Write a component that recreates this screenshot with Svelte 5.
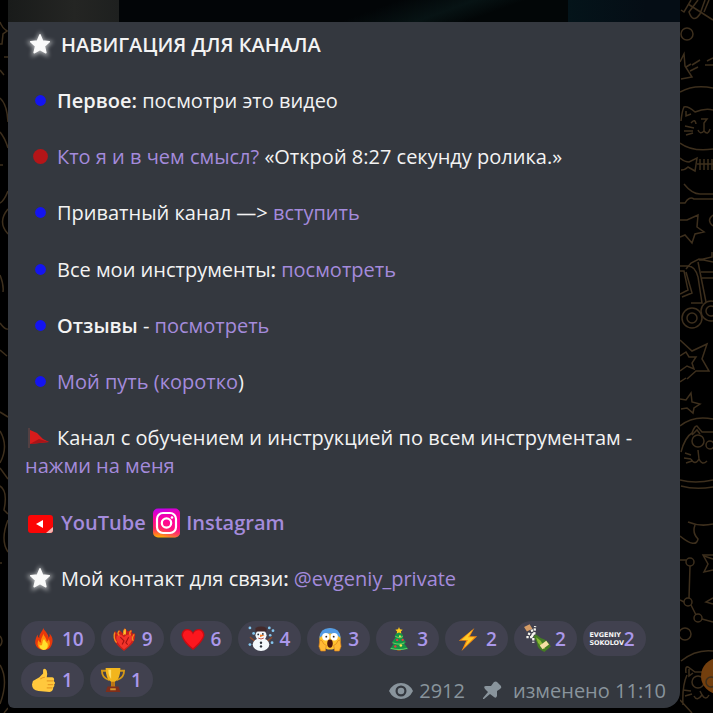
<script>
  const reactions = [
    ['fire', 10], ['burning', 9], ['heart', 6], ['snowman', 4], ['scream', 3],
    ['tree', 3], ['bolt', 2], ['bottle', 2], ['evgeniy', 2], ['thumb', 1], ['trophy', 1]
  ];
</script>

{#snippet star()}
  <svg class="star" viewBox="0 0 30 30" aria-hidden="true">
    <path class="glow" d="M15 4 L18.3 11.4 26 12.2 20.3 17.4 22 25 15 21.2 8 25 9.7 17.4 4 12.2 11.7 11.4Z" />
    <path fill="#fafafa" stroke="#fafafa" stroke-width="1.600" stroke-linejoin="round" d="M15 4 L17.8 10.8 25 11.5 19.7 16.200 21.3 23.3 15 19.8 8.7 23.3 10.3 16.200 5 11.5 12.2 10.8Z" />
  </svg>
{/snippet}

{#snippet dot(color, r)}
  <svg class="dot" viewBox="0 0 32 28" aria-hidden="true"><circle cx="15.500" cy="13.500" {r} fill={color} /></svg>
{/snippet}

<main>
  <svg class="wall" viewBox="0 0 8 713" preserveAspectRatio="xMinYMin slice" aria-hidden="true">
    <path d="M0 22Q2 28 7 31L3 34 2 44H0M4 57H8M0 70L4 75M0 98Q7 104 8 122M0 132Q5 138 8 148M0 165H3M8 191Q4 201 0 203M8 209Q-3 222 8 234M0 275Q4 285 3 292M0 323Q5 330 8 329M0 350L7 356M0 412L8 417M0 431Q9 446 0 463M0 468L8 479M0 486Q8 491 4 510L8 514M8 520Q0 540 8 552M0 563H2M0 636Q4 641 0 646M0 665Q9 680 0 704M4 713L8 708" />
  </svg>

  <article>
    <div class="photo"><i></i><b></b><em></em></div>
    <div class="body">
      <p>{@render star()}<strong>НАВИГАЦИЯ ДЛЯ КАНАЛА</strong></p>
      <p>{@render dot('#1414f0', 5.4)}<strong>Первое:</strong> посмотри это видео</p>
      <p>{@render dot('#b51518', 7.4)}<a href="#about">Кто я и в чем смысл?</a> «Открой 8:27 секунду ролика.»</p>
      <p>{@render dot('#1414f0', 5.4)}Приватный канал —&gt; <a href="#join">вступить</a></p>
      <p>{@render dot('#1414f0', 5.4)}Все мои инструменты<strong>:</strong> <a href="#tools">посмотреть</a></p>
      <p>{@render dot('#1414f0', 5.4)}<strong>Отзывы</strong> - <a href="#reviews">посмотреть</a></p>
      <p>{@render dot('#1414f0', 5.4)}<a href="#path">Мой путь (коротко</a>)</p>
      <p>
        <svg class="dot" viewBox="0 0 32 28" aria-hidden="true"><path d="M4 4V24" stroke="#5c4346" stroke-width="1.5" /><path d="M5 6L12 9 18 15 24 18 5 20Z" fill="#d91b1b" /><path d="M5 20L14 15 24 18Z" fill="#a81418" /></svg>Канал с обучением и инструкцией по всем инструментам - <a href="#learn">нажми на меня</a>
      </p>
      <p>
        <svg class="yt" viewBox="0 0 36 28" aria-hidden="true"><rect x="3" y="6" width="25" height="18" rx="3" fill="#fb0505" /><path d="M18 11V19L11 15Z" fill="#fff" /><path d="M28 18L21 24H25Q28 24 28 21Z" fill="#f5b4b0" /></svg><a class="semi" href="#youtube">YouTube</a>
        <svg class="ig" viewBox="0 0 28 30" aria-hidden="true">
          <defs>
            <linearGradient id="ig" x1="0" y1="0" x2="0" y2="1"><stop offset="0" stop-color="#c000ef" /><stop offset=".35" stop-color="#ff00a0" /><stop offset=".7" stop-color="#ff2860" /><stop offset="1" stop-color="#ffb000" /></linearGradient>
            <radialGradient id="igr" cx="1" cy=".5" r=".8"><stop stop-color="#ff009c" /><stop offset="1" stop-color="#ff009c" stop-opacity="0" /></radialGradient>
          </defs>
          <rect y="0.500" width="27" height="29" rx="5" fill="url(#ig)" /><rect y="0.500" width="27" height="29" rx="5" fill="url(#igr)" />
          <g fill="none" stroke="#fff" stroke-width="2.200"><rect x="4" y="5" width="19" height="20" rx="6" /><circle cx="13.500" cy="15" r="4.700" /></g><circle cx="19" cy="9.500" r="1.300" fill="#fff" />
        </svg>
        <a class="semi" href="#instagram">Instagram</a>
      </p>
      <p>{@render star()}Мой контакт для связи<strong>:</strong> <a href="#contact">@evgeniy_private</a></p>

      <footer>
        <div class="reactions">
          {#each reactions as [name, count]}
            <button type="button" aria-label={`${name} ${count}`}>
              <svg class="emoji" viewBox="0 0 26 26" aria-hidden="true">
                {#if name === 'fire'}
                  <path fill="#e8380b" d="M12 1C14 5 18 7 18 12Q20 10 19 7C23 11 23 16 21 20Q19 25 13 25Q5 25 3.500 18C3 14 5 10 6 8Q6 11 8 12C7 7 12 5 12 1Z" />
                  <path fill="#ff8c0a" d="M12 7C13 10 16 12 16 16Q18 15 18 13Q21 18 18 22 16 25 12.500 25 7 24 6 19 6 16 7 14 8 17 10 17C9 12 12 11 12 7Z" />
                  <path fill="#ffe02c" d="M13 13Q16 18 17 18 18 25 12.500 25 8 24 8 19 10 21 11 19 11 15 13 13Z" />
                {:else if name === 'burning'}
                  <path fill="#c9201a" d="M13 26Q2 18 2 11L3 4 6 7 8 3 12 7 14 1 17 5 21 3 22 7 25 7Q26 15 20 20Z" />
                  <path fill="#f2342a" d="M5 10Q9 6 13 11 17 6 22 10 24 16 13 24 3 16 5 10Z" />
                  <path fill="none" stroke="#f48a1c" stroke-width="1.500" d="M3 6Q1 12 5 17M8 4Q5 7 8 9M14 2Q11 6 15 8M21 4Q18 6 20 9M24 8Q21 12 23 15" />
                  <path fill="none" stroke="#a31313" stroke-width="1.200" d="M9 11L13 15 11 19M18 11L15 17 17 19" /><path fill="#ffc52a" d="M13 4L15 2V7L12 9Z" />
                {:else if name === 'heart'}
                  <path fill="#c80c13" d="M13 25Q2 17 0.500 9C1 0 11 1 13 6 15 1 25 0 25.500 9 24 17 13 25 13 25Z" />
                  <path fill="#fc171e" d="M13 23Q3 15 2 9C3 2 10 2 13 8 16 2 23 2 24 9 23 15 13 23 13 23Z" />
                {:else if name === 'snowman'}
                  <path stroke="#8b4a2e" stroke-width="1.500" d="M6 15L1 11M20 15L25 11" />
                  <ellipse cx="13" cy="19" rx="9" ry="7" fill="#f4f8fc" /><circle cx="13" cy="9" r="6" fill="#f4f8fc" />
                  <path fill="#43292a" d="M7 1Q13-2 19 1L19 5H7Z" /><path fill="#ef7b24" d="M12 8L17 9 12 11Z" />
                  <g fill="#2a3038"><circle cx="10" cy="8" r="1" /><circle cx="15" cy="7.500" r="1" /><circle cx="13" cy="17" r="1.300" /><circle cx="13" cy="21" r="1.300" /></g>
                  <path stroke="#b7463b" d="M10 12Q13 14 16 12" fill="none" />
                  <g fill="#84c6ef"><circle cx="1" cy="1" r="1.500" /><circle cx="5" cy="7" r="1.500" /><circle cx="22" cy="1" r="1.500" /><circle cx="26" cy="4" r="1.500" /><circle cx="23" cy="9" r="1.400" /><circle cx="1" cy="19" r="1.500" /><circle cx="25" cy="17" r="1.500" /></g>
                {:else if name === 'scream'}
                  <circle cx="13" cy="13" r="11.500" fill="#ffc32f" /><path fill="#529be5" d="M1.500 12Q2 1 13 1T24.500 12Q19 7 13 7T1.500 12Z" />
                  <circle cx="8.500" cy="10.500" r="4" fill="#fff" /><circle cx="17.500" cy="10.500" r="4" fill="#fff" /><circle cx="9" cy="10.500" r="1" fill="#38251d" /><circle cx="17" cy="10.500" r="1" fill="#38251d" />
                  <ellipse cx="13" cy="18" rx="3" ry="4.500" fill="#4c1710" /><path fill="#ffba36" stroke="#d87c19" stroke-width=".7" d="M2 14Q5 14 6 18L9 20 8 26H3L1 21ZM24 14Q21 14 20 18L17 20 18 26H23L25 21Z" />
                {:else if name === 'tree'}
                  <path fill="#8b4525" d="M11 22H15V26H11Z" /><path fill="#159447" d="M13 3L18 10H16L21 17H18L23 24H3L8 17H5L10 10H8Z" />
                  <path fill="none" stroke="#5ed05f" stroke-width="1.300" d="M9 10Q14 13 17 10M6 17Q14 20 19 17M4 23Q13 26 22 23" />
                  <path fill="#ffc91c" d="M13 0L14 2.500 17 3 15 5 15.500 7 13 6 10.500 7 11 5 9 3 12 2.500Z" /><g fill="#ef3540"><circle cx="11" cy="14" r="1.300" /><circle cx="17" cy="14" r="1.200" /><circle cx="9" cy="21" r="1.300" /></g><g fill="#ffe64b"><circle cx="14" cy="10" r="1" /><circle cx="15" cy="20" r="1.400" /></g>
                {:else if name === 'bolt'}
                  <path fill="#f48b12" d="M20 1L3 15H11L6 26 23 10H15Z" /><path fill="#ffcc28" d="M18 3L6 14H13L9 22 20 11H13Z" />
                {:else if name === 'bottle'}
                  <path fill="#d49b65" d="M-1 0L5-3 8 2 2 5Z" /><path fill="#447b24" d="M9 10L12 8 17 12Q25 14 28 21L21 27Q13 24 13 17Z" /><path fill="#8bba36" d="M12 11L17 15 22 24 19 23 14 17Z" /><path fill="#f6dea4" d="M16 20L23 15 26 19 19 24Z" />
                  <path fill="none" stroke="#f6f5ed" stroke-width="2.500" stroke-dasharray="2.500 1.500" d="M9 10L2 6M9 9L7 2M10 8L11-1M8 11L0 11M9 12L9 17" />
                {:else if name === 'evgeniy'}
                  <text x="-5" y="11" class="tiny">EVGENIY</text><text x="-5" y="20" class="tiny">SOKOLOV</text>
                {:else if name === 'thumb'}
                  <path fill="#ffc83d" d="M1 14L8 10 12 6V2Q14-1 16 3 17 6 16 10H22Q25 11 23.500 14 26 16 24 18 25 20 23 21 23 25 19 26L7 25Q0 24 0 18Z" /><path fill="none" stroke="#e89a22" stroke-width="1.200" d="M16 14H23M17 18H23M16 21.500H22M9 12Q11 10 14 10" />
                {:else}
                  <path fill="none" stroke="#d59916" stroke-width="2" d="M6 3H1Q1 11 9 13M20 3H25Q25 11 17 13" /><path fill="#f2b51d" d="M5 0H21Q21 12 15 15V21H11V15Q5 12 5 0Z" /><path fill="#ffe06b" d="M8 2H11V12Q8 9 8 2Z" /><path fill="#b97516" d="M11 15H15V20L18 21H8L11 20Z" /><path fill="#7e2e1b" d="M7 20H19L21 26H5Z" /><path fill="#d4932e" d="M10 22H16V24H10Z" />
                {/if}
              </svg>
              <span>{count}</span>
            </button>
          {/each}
        </div>
        <div class="meta">
          <svg class="eye" viewBox="0 0 24 18" aria-hidden="true"><path fill="#89949c" fill-rule="evenodd" d="M0 9Q4 1 12 1T24 9Q20 17 12 17T0 9ZM12 3.500A5.500 5.500 0 1 0 12 14.500 5.500 5.500 0 1 0 12 3.500Z" /><circle cx="12" cy="9" r="3.300" fill="#89949c" /></svg>
          <span>2912</span>
          <svg class="pin" viewBox="0 0 20 20" aria-hidden="true"><path fill="#89949c" d="M12 1Q14 0 15 1L19 5Q20 7 18 8L15 10 15 15Q14 18 12 16L8 13 2 18 1 18 1 17 6 11 3 8Q1 5 4 5L9 5Z" /></svg>
          <span>изменено 11:10</span>
        </div>
      </footer>
    </div>
  </article>

  <svg class="wall" viewBox="0 0 33 713" preserveAspectRatio="xMinYMin slice" aria-hidden="true">
    <path d="M1 10L4 12 11 0M18 0L9 12Q13 24 20 14L25 0M8 4L33 20M24 12L29 0" />
    <circle cx="7" cy="34" r="6" />
    <path d="M0 62L4 54 5 66 12 77 1 79M6 67L11 64M12 65L20 60M10 71L18 67M27 61L33 58M25 65H33M0 92Q14 84 33 88M0 143Q12 152 33 149M1 121Q2 111 4 107 8 106 15 112Q25 108 33 110M6 111L6 116 11 114M11 123Q15 118 16 124M21 119H27L24 123V131Q20 135 18 130M24 131Q28 136 30 129M5 126L14 128M4 131L13 131M6 135L13 133M0 158Q5 162 9 162L17 158 15 171 8 167Q5 170 1 170M17 164H33M20 159V170M24 159V170M28 159V170M32 159V170" />
    <path d="M4 184Q12 194 20 194H33M0 203H5Q9 196 14 199H33M0 220L7 220 18 215 17 227 24 232 15 234 12 243 5 235 0 237M33 215Q26 220 33 226M0 266H8Q15 266 18 277L22 303H11M6 269L11 263 19 259 33 262M18 262L26 302M19 260L32 257V252M0 271L4 271 8 290 0 294M6 272L12 293 2 297M21 272H33M22 278H33" />
    <circle cx="12" cy="318" r="10" /><circle cx="12" cy="318" r="5" /><circle cx="31" cy="311" r="10" /><circle cx="31" cy="311" r="5" />
    <path d="M0 340L12 351 27 344 22 359 29 371H16L7 379M0 356L6 352 9 357 16 357 12 363 14 369 7 366 0 371M0 382L6 378M0 399L6 400 11 393 12 402 20 404 14 408 13 413 7 408 1 409M0 426Q13 415 33 419M0 480Q15 484 33 480M1 486Q15 490 33 487M1 452Q5 437 12 433Q15 425 17 426L22 432H33M12 435L17 430 20 434M18 450L19 459Q15 466 11 459M19 459Q22 466 27 461M5 453L11 455M4 458L11 459M6 463L12 461M8 522Q20 527 33 524M15 525Q12 533 18 539 16 549 0 536M24 556L33 559" />
    <circle cx="18" cy="441" r="6" /><circle cx="30" cy="445" r="4" />
    <circle cx="10" cy="562" r="4" /><circle cx="8" cy="602" r="4" /><circle cx="18" cy="618" r="4" /><circle cx="5" cy="634" r="6" />
    <path d="M0 560H6M10 566L9 598M0 600L4 602M11 605L16 615M22 619L33 622M33 555H23L28 564 24 572 33 570M33 598L26 602 33 604M1 661Q16 649 33 651M6 673Q5 666 8 667L15 672H33M3 705Q2 686 7 675M0 700L12 713" />
    <circle cx="18" cy="682" r="6" /><path d="M9 669V676L13 673M3 690L11 691M5 696L12 694M20 691L22 695Q17 702 14 696M22 695Q26 701 29 695" />
    <circle class="orb" cx="39" cy="676" r="18" /><circle cx="31" cy="682" r="5" />
  </svg>
</main>

<style>
  :global(body) { margin: 0; background: #000; }
  main {
    display: grid;
    grid-template-columns: 8px minmax(0, 1fr) 33px;
    min-height: 100vh;
    overflow: hidden;
    background: #000;
    color: #f3f3f3;
    font: 20px/28px "Open Sans", "Noto Sans", sans-serif;
  }
  .wall { width: 100%; height: 713px; fill: none; stroke: #3d2f1d; stroke-width: 1.5; }
  .orb { fill: #733f0e; stroke: none; }
  article {
    align-self: start;
    overflow: hidden;
    background: #34383f;
    border-radius: 0 0 16px 6px;
  }
  .photo { display: flex; height: 22px; background: #020608; }
  .photo i { width: 111px; background: linear-gradient(90deg, #191b1a, #242523 60%, #1e201f); }
  .photo b { flex: 1; background: linear-gradient(160deg, #020507 55%, #071314 70%, #020607 80%); }
  .photo em { width: 112px; background: linear-gradient(90deg, #04141a, #050d15 70%); }
  .body { padding: 9px 12px 3px 17px; }
  p { margin: 0 0 28px; }
  p:nth-child(4n) { margin-bottom: 29px; }
  strong, .semi { font-weight: 600; }
  a { color: #a48bdc; text-decoration: none; }
  p svg { overflow: visible; vertical-align: top; }
  .star { width: 30px; height: 28px; margin-right: 6px; }
  .glow { fill: #fff; stroke: #fff; stroke-width: 3; opacity: 0.6; filter: blur(2px); }
  .dot { width: 32px; height: 28px; }
  .yt { width: 36px; height: 28px; }
  .ig { width: 28px; height: 30px; margin: -1px 0 -1px 2px; }
  footer { position: relative; margin-left: -4px; padding-bottom: 8px; }
  .reactions { display: flex; flex-wrap: wrap; gap: 6px; }
  button {
    display: flex;
    align-items: center;
    gap: 6px;
    height: 35px;
    padding: 0 11px;
    border: 0;
    border-radius: 18px;
    background: #41414f;
    color: #ab98eb;
    font: 600 19px/28px "Open Sans", "Noto Sans", sans-serif;
  }
  .emoji { width: 24px; height: 24px; overflow: visible; }
  .tiny { fill: #f5f5f5; font: 700 7px "DejaVu Sans", sans-serif; }
  .meta {
    position: absolute;
    right: 2px;
    bottom: 0;
    display: flex;
    align-items: center;
    color: #89949c;
  }
  .eye { width: 24px; height: 18px; margin-right: 6px; }
  .pin { width: 20px; height: 20px; margin: 0 11px 0 17px; }
</style>
